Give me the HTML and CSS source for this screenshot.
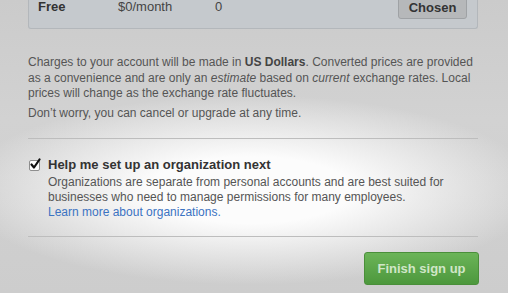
FILE: index.html
```html
<!DOCTYPE html>
<html lang="en">
<head>
  <meta charset="UTF-8">
  <meta name="viewport" content="width=device-width, initial-scale=1.0">
  <title>Choose your plan</title>
  <link rel="stylesheet" href="styles.css">
</head>
<body>
  <main class="signup">
    <!-- Tabla de planes (solo la última fila visible) -->
    <div class="plan-table">
      <div class="plan-row">
        <span class="plan-name">Free</span>
        <span class="plan-price">$0/month</span>
        <span class="plan-repos">0</span>
        <button class="button-chosen">Chosen</button>
      </div>
    </div>

    <p class="note">Charges to your account will be made in <strong>US Dollars</strong>. Converted prices are provided as a convenience and are only an <em>estimate</em> based on <em>current</em> exchange rates. Local prices will change as the exchange rate fluctuates.</p>
    <p class="note">Don’t worry, you can cancel or upgrade at any time.</p>

    <section class="org-option">
      <span class="checkbox" aria-hidden="true">
        <svg width="13" height="13" viewBox="0 0 13 13">
          <path d="M2.5 6.5 L5 9.5 L10.5 1.5" fill="none" stroke="#111" stroke-width="2.2" stroke-linecap="round" stroke-linejoin="round"/>
        </svg>
      </span>
      <div class="org-text">
        <h3 class="org-title">Help me set up an organization next</h3>
        <p class="org-desc">Organizations are separate from personal accounts and are best suited for businesses who need to manage permissions for many employees.</p>
        <a class="org-link" href="#">Learn more about organizations.</a>
      </div>
    </section>

    <div class="actions">
      <button class="button-finish">Finish sign up</button>
    </div>
  </main>
</body>
</html>
```

FILE: styles.css
```css
:root {
  --color-text: #555555;
  --color-dark: #333333;
  --color-link: #3b73c2;
  --color-line: #bdbdbd;
}
* {
  margin: 0;
  padding: 0;
  box-sizing: border-box;
}
html, body {
  height: 100%;
}
body {
  font-family: "Liberation Sans", Arial, sans-serif;
  overflow: hidden;
  background-color: #cccccc;
  background-image:
    radial-gradient(ellipse 290px 95px at 250px 190px, #fcfcfc 35%, rgba(204, 204, 204, 0) 100%),
    linear-gradient(to bottom, #cbcbcb 0, #d2d2d2 120px, #cdcdcd 293px);
}
.signup {
  padding: 0 30px 0 28px;
}
.plan-table {
  margin-top: -6px;
  background-color: #c5c9cd;
  border: 1px solid #b3b7bb;
  border-top: 0;
  border-radius: 0 0 3px 3px;
  padding: 0 10px 9px 9px;
}
.plan-row {
  display: flex;
  align-items: center;
  font-size: 13px;
  line-height: 12px;
  color: #444444;
}
.plan-name {
  width: 80px;
  font-weight: bold;
  color: var(--color-dark);
}
.plan-price {
  width: 97px;
}
.plan-repos {
  flex: 1;
}
.button-chosen {
  width: 69px;
  height: 25px;
  padding-top: 1px;
  font-family: inherit;
  font-size: 13px;
  font-weight: bold;
  color: var(--color-dark);
  background-color: #b6b8ba;
  border: 1px solid #9fa2a5;
  border-radius: 3px;
}
.note {
  font-size: 12px;
  line-height: 15.5px;
  color: var(--color-text);
  margin-top: 4px;
}
.signup > .note:first-of-type {
  margin-top: 26px;
}
.note strong {
  color: #444444;
}
.org-option {
  display: flex;
  align-items: flex-start;
  margin-top: 17px;
  padding: 18px 0 16px 1px;
  border-top: 1px solid var(--color-line);
  border-bottom: 1px solid var(--color-line);
}
.checkbox {
  position: relative;
  width: 11px;
  height: 11px;
  margin-top: 3px;
  margin-right: 8px;
  background: #fff;
  border: 1px solid #8e8e8e;
  border-radius: 2px;
  flex-shrink: 0;
}
.checkbox svg {
  position: absolute;
  left: -1px;
  top: -3px;
}
.org-title {
  font-size: 13px;
  line-height: 16px;
  font-weight: bold;
  color: var(--color-dark);
  margin-bottom: 2px;
}
.org-desc {
  font-size: 12px;
  line-height: 15px;
  color: var(--color-text);
  max-width: 405px;
}
.org-link {
  display: block;
  font-size: 12px;
  line-height: 15px;
  color: var(--color-link);
  text-decoration: none;
}
.actions {
  display: flex;
  justify-content: flex-end;
  padding-top: 15px;
}
.button-finish {
  width: 115px;
  height: 33px;
  font-family: inherit;
  font-size: 13px;
  font-weight: bold;
  color: #d0e6c8;
  background: linear-gradient(to bottom, #6bb458, #4d983d);
  border: 1px solid #4a8f3a;
  border-radius: 3px;
  margin-right: -1px;
}
```
